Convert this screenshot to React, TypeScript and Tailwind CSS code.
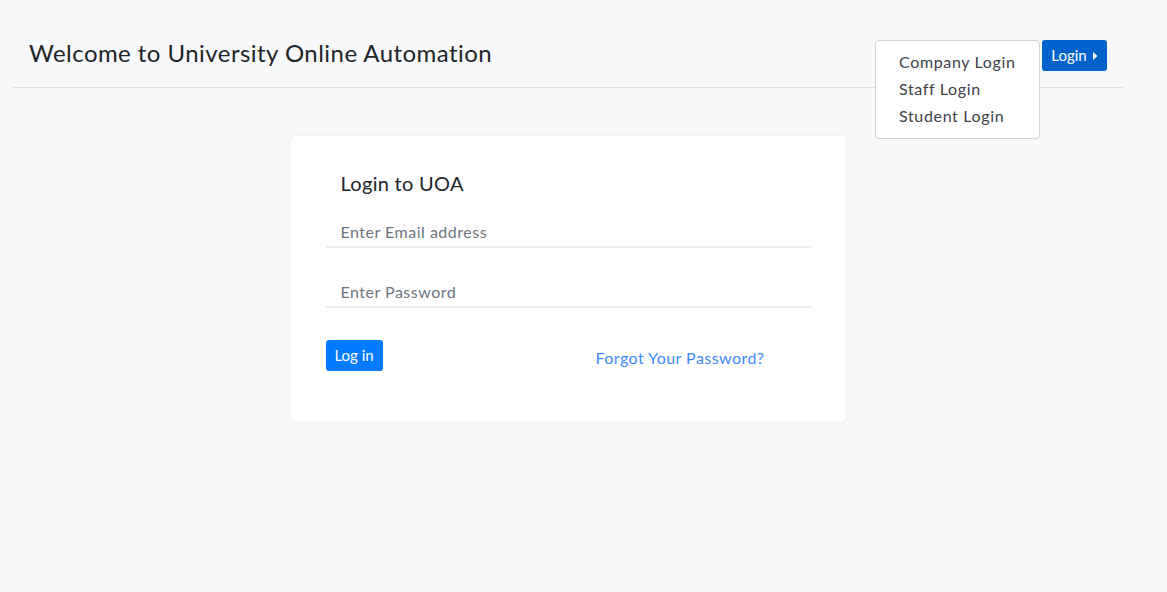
import React from "react";

const font = { fontFamily: "Lato, 'Open Sans', sans-serif" };

const LoginMenu = () => (
  <div className="relative flex items-start">
    <div className="absolute right-[67px] top-0 w-[165px] h-[99px] bg-white border border-[#d0d4d8] rounded-[4px] pt-[9px] flex flex-col">
      <a className="pl-[23px] h-[27px] leading-[23px] text-[16px] text-[#3d4247] tracking-[0.65px]">Company Login</a>
      <a className="pl-[23px] h-[27px] leading-[23px] text-[16px] text-[#3d4247] tracking-[0.65px]">Staff Login</a>
      <a className="pl-[23px] h-[27px] leading-[23px] text-[16px] text-[#3d4247] tracking-[0.65px]">Student Login</a>
    </div>
    <button className="h-[31px] w-[65px] bg-[#0062cc] text-white text-[15px] rounded-[3px] flex items-center justify-center gap-[6px]">
      Login
      <svg width="5" height="8" viewBox="0 0 5 8">
        <path d="M0 0 L4.5 4 L0 8 Z" fill="white" />
      </svg>
    </button>
  </div>
);

const App = () => {
  // Field rows with underline inputs
  const fields = ["Enter Email address", "Enter Password"];

  return (
    <div className="min-h-[592px] bg-[#f8f9fa] text-[#212529]" style={font}>
      <div className="mx-[13px] w-[1110px]">
        <header className="h-[88px] border-b border-[#dee2e6] flex items-start justify-between pl-[16px] pr-[16px]">
          <h1 className="mt-[37px] text-[24px] leading-[32px] font-normal tracking-[0.45px] text-[#212529]">
            Welcome to University Online Automation
          </h1>
          <div className="mt-[40px]">
            <LoginMenu />
          </div>
        </header>
        <div className="flex justify-center pt-[48px]">
          <div className="w-[555px] h-[286px] bg-white rounded-[5px] shadow-[0_0_6px_rgba(0,0,0,0.05)] px-[35px] pt-[34px]">
            <h2 className="pl-[15px] text-[20px] leading-[26px] font-normal text-[#212529] tracking-[0.3px]">
              Login to UOA
            </h2>
            <div className="mt-[18px] flex flex-col gap-[26px]">
              {fields.map((f) => (
                <input
                  key={f}
                  placeholder={f}
                  type={f.includes("Password") ? "password" : "text"}
                  className="h-[34px] pl-[15px] pt-[3px] border-b-2 border-[#ededed] outline-none text-[16px] placeholder:text-[#6c757d] tracking-[0.5px] bg-transparent"
                />
              ))}
            </div>
            <div className="mt-[32px] flex items-center">
              <button className="h-[31px] w-[57px] bg-[#007bff] text-white text-[15px] rounded-[3px]">
                Log in
              </button>
              <a className="ml-[213px] mt-[4px] text-[16px] text-[#3d8bff] tracking-[0.45px]">
                Forgot Your Password?
              </a>
            </div>
          </div>
        </div>
      </div>
    </div>
  );
};

export default App;
